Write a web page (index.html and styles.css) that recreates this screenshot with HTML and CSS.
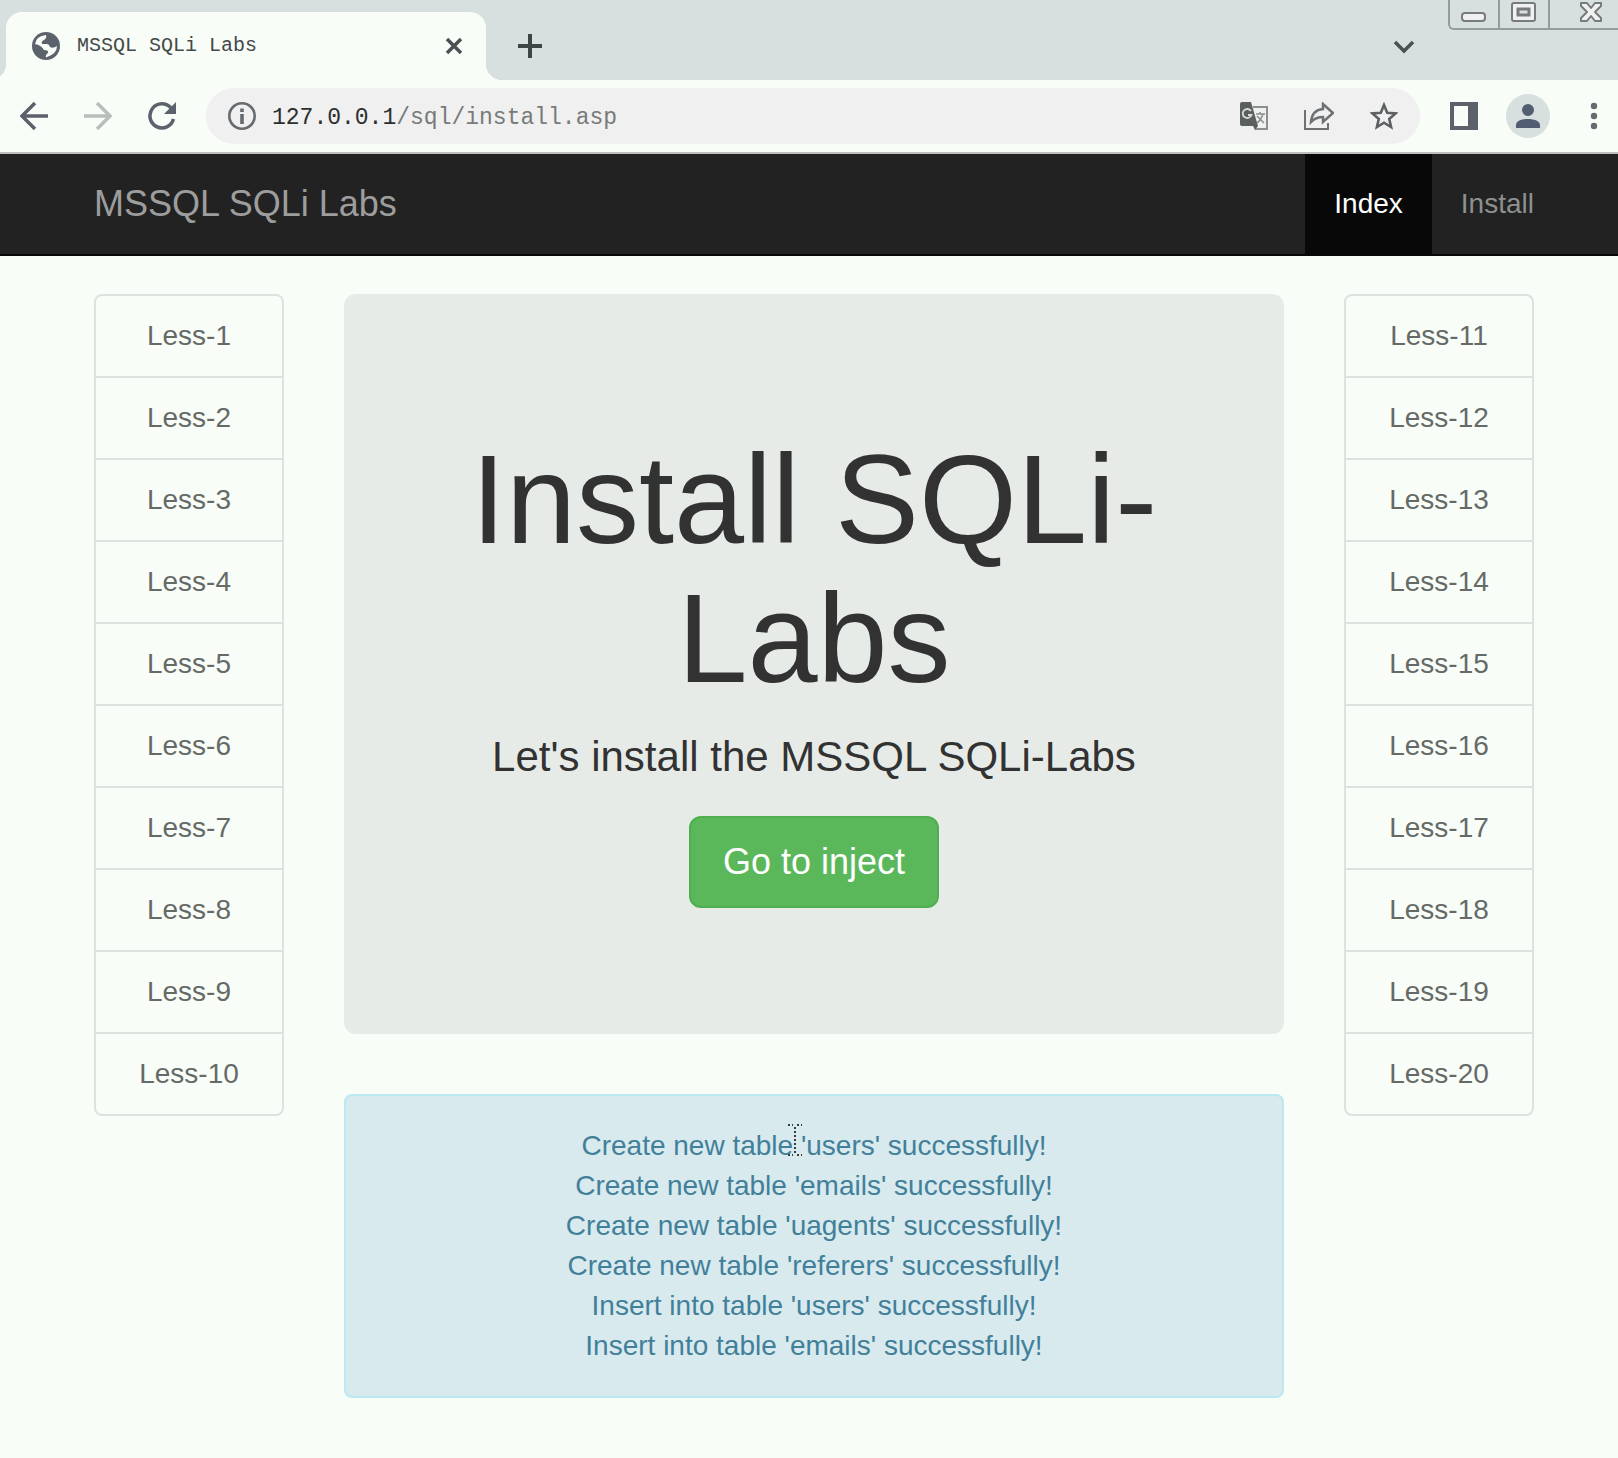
FILE: index.html
```html
<!DOCTYPE html>
<html lang="en">
<head>
<meta charset="utf-8">
<title>MSSQL SQLi Labs</title>
<link rel="stylesheet" href="styles.css">
</head>
<body>
<header class="browser">
  <div class="tabstrip">
    <div class="tab">
      <svg width="28" height="28" viewBox="0 0 28 28"><circle cx="14" cy="14" r="14" fill="#5c626b"/><path d="M3 12Q4 4 14 3Q15 6 12 8Q9 9 10 12H15Q17 12 18 15Q21 17 25 14Q25 22 14 25.500Q13 23 16 21Q17 18 12 18Q9 13 3 12Z" fill="#f8fdf8"/></svg>
      <span class="tab-title">MSSQL SQLi Labs</span>
      <button class="icon-button" type="button" aria-label="Close tab"><svg width="18" height="18" viewBox="0 0 18 18"><path d="M2 2L16 16M16 2L2 16" stroke="#4b5052" stroke-width="3.500"/></svg></button>
    </div>
    <button class="icon-button new-tab" type="button" aria-label="New tab"><svg width="24" height="24" viewBox="0 0 24 24"><path d="M12 0V24M0 12H24" stroke="#3f4446" stroke-width="4"/></svg></button>
    <button class="icon-button tab-search" type="button" aria-label="Search tabs"><svg width="22" height="14" viewBox="0 0 22 14"><path d="M2 2L11 11L20 2" fill="none" stroke="#4b5052" stroke-width="3.500"/></svg></button>
    <div class="window-controls">
      <button type="button" aria-label="Minimize"><svg width="26" height="22" viewBox="0 0 26 22"><rect x="1" y="11" width="23" height="8" rx="3" fill="#f0f2f2" stroke="#777b7b" stroke-width="2"/></svg></button>
      <button type="button" aria-label="Maximize"><svg width="26" height="22" viewBox="0 0 26 22"><rect x="1" y="1" width="23" height="18" rx="2" fill="#f0f2f2" stroke="#777b7b" stroke-width="2"/><rect x="7" y="7" width="11" height="6" fill="#d8e0df" stroke="#777b7b" stroke-width="3"/></svg></button>
      <button class="close-window" type="button" aria-label="Close"><svg width="24" height="22" viewBox="0 0 24 22"><path d="M2 1H8L12 6L16 1H22V4L16 10L22 16V19H16L12 14L8 19H2V16L8 10L2 4Z" fill="#f0f2f2" stroke="#777b7b" stroke-width="2" stroke-linejoin="round"/></svg></button>
    </div>
  </div>
  <div class="toolbar">
    <button class="icon-button" type="button" aria-label="Back"><svg width="28" height="28" viewBox="0 0 28 28"><path d="M28 14H3M15 1L2 14L15 27" fill="none" stroke="#5c626b" stroke-width="3.500"/></svg></button>
    <button class="icon-button" type="button" aria-label="Forward"><svg width="28" height="28" viewBox="0 0 28 28"><path d="M0 14H25M13 1L26 14L13 27" fill="none" stroke="#b9bdbb" stroke-width="3.500"/></svg></button>
    <button class="icon-button" type="button" aria-label="Reload"><svg width="28" height="28" viewBox="0 0 28 28"><path d="M25.500 17A12 12 0 1 1 23 6" fill="none" stroke="#5c626b" stroke-width="3.500"/><path d="M28 0V12H16Z" fill="#5c626b"/></svg></button>
    <div class="omnibox">
      <svg width="28" height="28" viewBox="0 0 28 28"><circle cx="14" cy="14" r="12.700" fill="none" stroke="#656b6e" stroke-width="2.600"/><path d="M14 6.500V10M14 12V22" stroke="#656b6e" stroke-width="3.600"/></svg>
      <span class="url"><span class="host">127.0.0.1</span>/sql/install.asp</span>
      <button class="icon-button" type="button" aria-label="Translate"><svg width="28" height="28" viewBox="0 0 28 28"><path d="M13 5H27V27H15" fill="none" stroke="#8b8f8f" stroke-width="2"/><path d="M2 0H11L18 24H2Q0 24 0 22V2Q0 0 2 0Z" fill="#5b5f5f"/><path d="M11 9A4.500 4.500 0 1 0 11.500 13H8" fill="none" stroke="#d8dada" stroke-width="1.800"/><path d="M16 12H25M20 10V12M23 12Q21 18 17 21M17 14L24 21" fill="none" stroke="#8b8f8f" stroke-width="1.600"/><path d="M13 24H18L15 28Z" fill="#5b5f5f"/></svg></button>
      <button class="icon-button" type="button" aria-label="Share"><svg width="30" height="28" viewBox="0 0 30 28"><path d="M1 8V27H24V21" fill="none" stroke="#6d7173" stroke-width="2"/><path d="M19 2L29 11L19 20V15Q12 15 7 20Q8 8 19 7Z" fill="none" stroke="#6d7173" stroke-width="2.500"/></svg></button>
      <button class="icon-button" type="button" aria-label="Bookmark"><svg width="28" height="28" viewBox="0 0 28 28"><path d="M14 3L17.200 10.700L25.500 11.400L19.200 16.900L21.100 25L14 20.700L6.900 25L8.800 16.900L2.500 11.400L10.800 10.700Z" fill="none" stroke="#5d6163" stroke-width="2.600"/></svg></button>
    </div>
    <button class="icon-button" type="button" aria-label="Side panel"><svg width="28" height="28" viewBox="0 0 28 28"><path fill-rule="evenodd" d="M0 0H28V28H0ZM4 4V24H18V4Z" fill="#5c626b"/></svg></button>
    <button class="icon-button profile" type="button" aria-label="Profile"><svg width="44" height="44" viewBox="0 0 44 44"><circle cx="22" cy="22" r="22" fill="#d8e0df"/><circle cx="22" cy="16" r="6" fill="#515d70"/><path d="M10 34V31C10 23 34 23 34 31V34Z" fill="#515d70"/></svg></button>
    <button class="icon-button menu" type="button" aria-label="Menu"><svg width="8" height="28" viewBox="0 0 8 28"><g fill="#656b6e"><circle cx="4" cy="4" r="3.200"/><circle cx="4" cy="14" r="3.200"/><circle cx="4" cy="24" r="3.200"/></g></svg></button>
  </div>
</header>

<nav class="navbar">
  <div class="container navbar-inner">
    <a class="brand" href="#">MSSQL SQLi Labs</a>
    <ul class="nav">
      <li><a class="active" href="#">Index</a></li>
      <li><a href="#">Install</a></li>
    </ul>
  </div>
</nav>

<main class="container row">
  <div class="list-group">
    <a href="#">Less-1</a>
    <a href="#">Less-2</a>
    <a href="#">Less-3</a>
    <a href="#">Less-4</a>
    <a href="#">Less-5</a>
    <a href="#">Less-6</a>
    <a href="#">Less-7</a>
    <a href="#">Less-8</a>
    <a href="#">Less-9</a>
    <a href="#">Less-10</a>
  </div>
  <div class="content">
    <section class="jumbotron">
      <h1>Install SQLi-Labs</h1>
      <p>Let's install the MSSQL SQLi-Labs</p>
      <button class="btn" type="button">Go to inject</button>
    </section>
    <div class="alert">
      Create new table<span class="caret-spot"> <svg class="cursor" width="16" height="32" viewBox="0 0 16 32"><path d="M1 1H6M10 1H15M8 3V29M1 31H6M10 31H15" fill="none" stroke="#3a3a3a" stroke-width="2" stroke-dasharray="2 2"/></svg></span>'users' successfully!<br>
      Create new table 'emails' successfully!<br>
      Create new table 'uagents' successfully!<br>
      Create new table 'referers' successfully!<br>
      Insert into table 'users' successfully!<br>
      Insert into table 'emails' successfully!
    </div>
  </div>
  <div class="list-group">
    <a href="#">Less-11</a>
    <a href="#">Less-12</a>
    <a href="#">Less-13</a>
    <a href="#">Less-14</a>
    <a href="#">Less-15</a>
    <a href="#">Less-16</a>
    <a href="#">Less-17</a>
    <a href="#">Less-18</a>
    <a href="#">Less-19</a>
    <a href="#">Less-20</a>
  </div>
</main>
</body>
</html>
```

FILE: styles.css
```css
* { box-sizing: border-box; }

body {
  margin: 0;
  background: #f8fdf8;
  color: #323232;
  font: 28px/40px "Liberation Sans", Arial, sans-serif;
}

a { text-decoration: none; }
svg { display: block; flex: none; }

button {
  border: 0;
  background: none;
  padding: 0;
  font: inherit;
}

/* Browser window */
.browser { font-family: "Liberation Mono", monospace; }

.tabstrip {
  position: relative;
  display: flex;
  align-items: flex-end;
  height: 80px;
  padding-left: 6px;
  background: #d8e0df;
}

.tab {
  position: relative;
  display: flex;
  align-items: center;
  width: 480px;
  height: 68px;
  padding: 0 23px 0 26px;
  border-radius: 16px 16px 0 0;
  background: #f8fdf8;
}

.tab::before,
.tab::after {
  content: "";
  position: absolute;
  bottom: 0;
  width: 16px;
  height: 16px;
}

.tab::before {
  right: 100%;
  background: radial-gradient(circle at 0 0, transparent 16px, #f8fdf8 16px);
}

.tab::after {
  left: 100%;
  background: radial-gradient(circle at 100% 0, transparent 16px, #f8fdf8 16px);
}

.tab-title {
  flex: 1;
  margin-left: 17px;
  color: #444948;
  font-size: 20px;
}

.new-tab { margin: 0 auto 22px 32px; }
.tab-search { margin: 0 203px 26px 0; }

.window-controls {
  position: absolute;
  top: 0;
  right: 0;
  display: flex;
  height: 30px;
  border: solid #969b9b;
  border-width: 0 0 2px 2px;
  border-radius: 0 0 0 6px;
}

.window-controls button {
  display: flex;
  justify-content: center;
  width: 50px;
  padding-top: 2px;
  border-right: 2px solid #969b9b;
}

.window-controls .close-window {
  width: 68px;
  padding-left: 14px;
  border: 0;
}

.toolbar {
  display: flex;
  align-items: center;
  gap: 36px;
  height: 74px;
  padding: 0 20px;
  border-bottom: 2px solid #bcc0bd;
}

.omnibox {
  display: flex;
  flex: 1;
  align-items: center;
  gap: 36px;
  height: 56px;
  margin: 0 -6px;
  padding: 0 22px;
  border-radius: 28px;
  background: #f0f0f0;
}

.url {
  flex: 1;
  margin-left: -20px;
  padding-top: 4px;
  color: #777b7a;
  font-size: 23px;
}

.host { color: #2c2f2e; }
.profile { margin-left: -8px; }
.menu { margin-left: 4px; }

/* Site navigation */
.navbar {
  border-bottom: 2px solid #080808;
  background: #222;
}

.container {
  display: flex;
  max-width: 1560px;
  margin: 0 auto;
  padding: 0 55px 0 65px;
}

.navbar-inner { justify-content: space-between; }

.brand {
  padding: 30px 0;
  color: #9d9d9d;
  font-size: 36px;
}

.nav {
  display: flex;
  margin: 0 -29px 0 0;
  padding: 0;
  list-style: none;
}

.nav a {
  display: block;
  padding: 30px 29px;
  color: #8d918e;
}

.nav .active {
  background: #080808;
  color: #fff;
}

/* Page body */
.row {
  align-items: flex-start;
  gap: 60px;
  padding-top: 38px;
  padding-bottom: 60px;
}

.list-group {
  width: 190px;
  border: 2px solid #dde2de;
  border-radius: 8px;
  text-align: center;
}

.list-group a {
  display: block;
  padding: 20px 28px;
  color: #666a67;
}

.list-group a + a { border-top: 2px solid #dde2de; }

.content {
  flex: 1;
  text-align: center;
}

.jumbotron {
  margin-bottom: 60px;
  padding: 136px 120px 126px;
  border-radius: 12px;
  background: #e7ebe7;
}

h1 {
  margin: 0 0 20px;
  font-size: 126px;
  font-weight: 400;
  line-height: 139px;
}

.jumbotron p {
  margin: 0 0 30px;
  font-size: 42px;
  line-height: 58px;
  white-space: nowrap;
}

.btn {
  padding: 20px 32px;
  border: 2px solid #4fae50;
  border-radius: 12px;
  background: #5ab75a;
  color: #fff;
  font-size: 36px;
  line-height: 48px;
}

.alert {
  padding: 30px;
  border: 2px solid #bce8f1;
  border-radius: 8px;
  background: #d8eaee;
  color: #42809a;
}

.caret-spot { position: relative; }

.cursor {
  position: absolute;
  top: -6px;
  left: -6px;
}
```
